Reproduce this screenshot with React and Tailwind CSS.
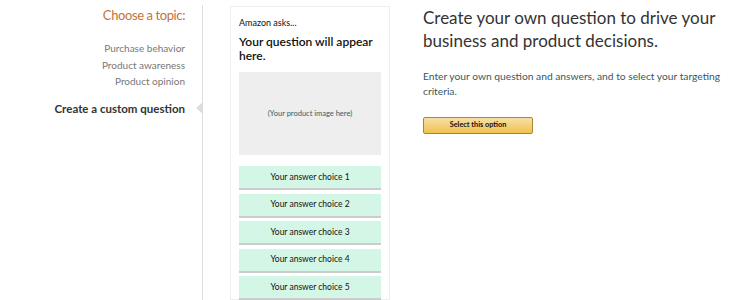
import React from "react";

const topics = ["Purchase behavior", "Product awareness", "Product opinion"];
const answers = [1, 2, 3, 4, 5];

const App = () => {
  return (
    <div className="h-[300px] w-[750px] overflow-hidden bg-white flex font-['Lato',sans-serif]">
      <div className="w-[203px] shrink-0 pt-[5px]">
        <div className="h-full border-r border-[#dddddd] pr-[17px] text-right">
          <div className="text-[13px] leading-[20px] tracking-[-0.4px] text-[#c7703a]">Choose a topic:</div>
          <div className="mt-[15px] flex flex-col text-[10px] leading-[16.5px] text-[#777777]">
            {topics.map((t) => (
              <span key={t}>{t}</span>
            ))}
          </div>
          <div className="relative mt-[9px] text-[11.5px] font-bold leading-[20px] text-[#333333]">
            Create a custom question
            <span className="absolute right-[-18px] top-[3.5px] h-0 w-0 border-y-[6.5px] border-r-[7px] border-y-transparent border-r-[#dddddd]" />
          </div>
        </div>
      </div>

      <div className="ml-[27px] mt-[6px] w-[160px] shrink-0 border border-[#eeeeee] px-[8px] pt-[10px]">
        <div className="text-[9px] leading-[12px] text-[#111111]">Amazon asks...</div>
        <div className="mt-[6px] text-[12px] font-semibold leading-[14px] text-[#111111]">
          Your question will appear here.
        </div>
        <div className="mt-[9px] flex h-[83px] items-center justify-center bg-[#eeeeee] text-[7.5px] text-[#2f5f6b]">
          (Your product image here)
        </div>
        <div className="mt-[11px] flex flex-col gap-[3.5px]">
          {answers.map((n) => (
            <div
              key={n}
              className="flex h-[24px] items-center justify-center border-b-2 border-[#cccccc] bg-[#d4f6e6] text-[8.5px] text-[#111111]"
            >
              Your answer choice {n}
            </div>
          ))}
        </div>
      </div>

      <div className="ml-[33px] pt-[6px]">
        <div className="w-[300px] text-[17px] leading-[23px] text-[#333333]">
          Create your own question to drive your business and product decisions.
        </div>
        <div className="mt-[16.5px] w-[320px] text-[10.25px] leading-[15px] text-[#35595f]">
          Enter your own question and answers, and to select your targeting criteria.
        </div>
        <button className="mt-[18.5px] flex h-[17px] w-[110px] items-center justify-center rounded-[2px] border border-[#a88734] bg-gradient-to-b from-[#f7dfa5] to-[#f0c14b] text-[7.3px] font-bold text-[#111111]">
          Select this option
        </button>
      </div>
    </div>
  );
};

export default App;
